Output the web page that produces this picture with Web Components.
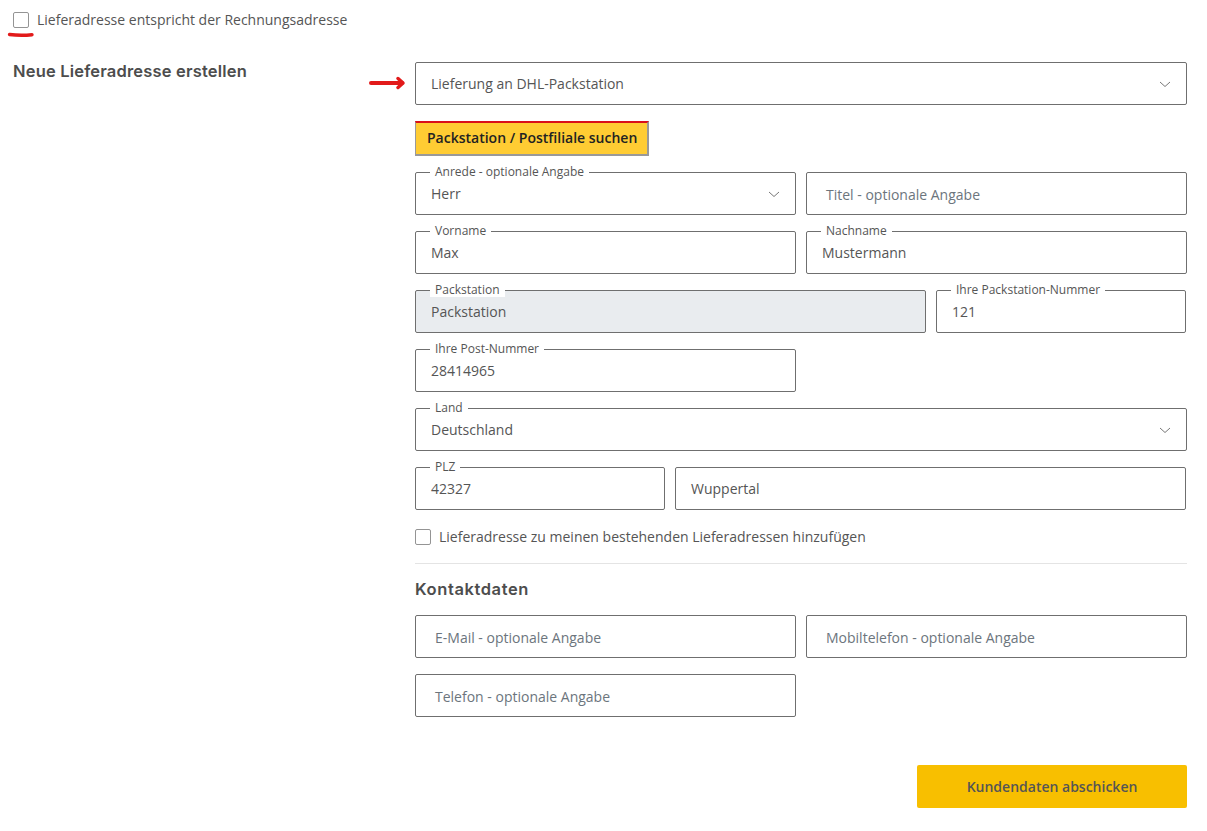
<!DOCTYPE html>
<html lang="de">
<head>
<meta charset="utf-8">
<title>Lieferadresse</title>
<style>
  html, body { margin: 0; background: #fff; }
  body { font-family: "Open Sans", "Liberation Sans", sans-serif; color: #555; }
</style>
</head>
<body>
<address-page>
  <check-row slot="top" inset="13">Lieferadresse entspricht der Rechnungsadresse</check-row>
  <section-title slot="side">Neue Lieferadresse erstellen</section-title>

  <form-field value="Lieferung an DHL-Packstation" select></form-field>
  <yellow-search-button>Packstation / Postfiliale suchen</yellow-search-button>

  <field-row columns="1fr 1fr">
    <form-field label="Anrede - optionale Angabe" value="Herr" select></form-field>
    <form-field placeholder="Titel - optionale Angabe" nudge></form-field>
  </field-row>
  <field-row columns="1fr 1fr">
    <form-field label="Vorname" value="Max"></form-field>
    <form-field label="Nachname" value="Mustermann"></form-field>
  </field-row>
  <field-row columns="511px 250px">
    <form-field label="Packstation" value="Packstation" disabled></form-field>
    <form-field label="Ihre Packstation-Nummer" value="121"></form-field>
  </field-row>
  <field-row columns="1fr 1fr">
    <form-field label="Ihre Post-Nummer" value="28414965"></form-field>
  </field-row>
  <form-field label="Land" value="Deutschland" select></form-field>
  <field-row columns="250px 511px">
    <form-field label="PLZ" value="42327"></form-field>
    <form-field value="Wuppertal"></form-field>
  </field-row>

  <check-row class="save">Lieferadresse zu meinen bestehenden Lieferadressen hinzufügen</check-row>
  <hr-line></hr-line>
  <section-title class="contact">Kontaktdaten</section-title>

  <field-row columns="1fr 1fr">
    <form-field placeholder="E-Mail - optionale Angabe" nudge></form-field>
    <form-field placeholder="Mobiltelefon - optionale Angabe" nudge></form-field>
  </field-row>
  <field-row columns="1fr 1fr">
    <form-field placeholder="Telefon - optionale Angabe" nudge></form-field>
  </field-row>

  <submit-button slot="footer">Kundendaten abschicken</submit-button>
</address-page>

<script>
class AddressPage extends HTMLElement {
  static template = /* html */ `
    <style>
      :host {
        display: block;
        position: relative;
        box-sizing: border-box;
        height: 831px;
        padding: 11px 20px 0 0;
      }
      .columns {
        display: grid;
        grid-template-columns: 415px 772px;
        margin-top: 32px;
      }
      .side { padding: 0 0 0 13px; }
      .main {
        display: flex;
        flex-direction: column;
        gap: 16px;
        padding-top: 1px;
      }
      ::slotted(.save) { margin-top: 2px; }
      ::slotted(hr-line) { margin-top: 1px; }
      ::slotted(.contact) { margin-top: -1px; letter-spacing: 0.6px; }
      .footer {
        display: flex;
        justify-content: flex-end;
        margin-top: 48px;
      }
      /* hand drawn marks on top of the screenshot */
      .mark { position: absolute; }
      .underline { left: 6px; top: 32px; }
      .arrow { left: 368px; top: 75px; }
    </style>
    <slot name="top"></slot>
    <div class="columns">
      <div class="side"><slot name="side"></slot></div>
      <div class="main"><slot></slot></div>
    </div>
    <div class="footer"><slot name="footer"></slot></div>
    <svg class="mark underline" width="29" height="6" viewBox="0 0 29 6">
      <path d="M3.500 2.500C10 3.300 20 3.300 26 2.700" fill="none" stroke="#e21a1a" stroke-width="3.400" stroke-linecap="round"/>
    </svg>
    <svg class="mark arrow" width="38" height="16" viewBox="0 0 38 16">
      <path d="M3 8H34" fill="none" stroke="#e21a1a" stroke-width="4" stroke-linecap="round"/>
      <path d="M30 3.500L35 8L30 12.500" fill="none" stroke="#e21a1a" stroke-width="3.500" stroke-linecap="round" stroke-linejoin="round"/>
    </svg>
  `

  constructor() {
    super()
    this.attachShadow({ mode: "open" }).innerHTML = this.constructor.template
  }
}

class FieldRow extends HTMLElement {
  static template = /* html */ `
    <style>
      :host { display: grid; column-gap: 10px; }
    </style>
    <slot></slot>
  `

  constructor() {
    super()
    this.attachShadow({ mode: "open" }).innerHTML = this.constructor.template
  }

  connectedCallback() {
    this.style.gridTemplateColumns = this.getAttribute("columns")
  }
}

class FormField extends HTMLElement {
  static template = /* html */ `
    <style>
      :host {
        display: block;
        position: relative;
        box-sizing: border-box;
        height: 43px;
        padding: 0 15px;
        border: 1px solid #6f6f6f;
        border-radius: 2px;
        font-size: 14px;
        line-height: 41px;
        color: #555;
        background: #fff;
      }
      :host([disabled]) { background: #e9ecef; }
      :host([nudge]) { padding-left: 19px; color: #6c757d; }
      .value { display: block; white-space: nowrap; }
      :host([nudge]) .value { position: relative; top: 1px; }
      label {
        position: absolute;
        left: 14px;
        top: -8px;
        padding: 0 5px;
        font-size: 12px;
        line-height: 14px;
        background: #fff;
        white-space: nowrap;
      }
      label:empty { display: none; }
      svg { position: absolute; right: 15px; top: 18px; }
      :host(:not([select])) svg { display: none; }
    </style>
    <label></label>
    <span class="value"></span>
    <svg width="12" height="7" viewBox="0 0 12 7">
      <path d="M1 1L6 5.500L11 1" fill="none" stroke="#777" stroke-width="1"/>
    </svg>
  `

  constructor() {
    super()
    this.attachShadow({ mode: "open" }).innerHTML = this.constructor.template
  }

  connectedCallback() {
    const shadow = this.shadowRoot
    shadow.querySelector("label").textContent = this.getAttribute("label") || ""
    shadow.querySelector(".value").textContent =
      this.getAttribute("value") || this.getAttribute("placeholder") || ""
  }
}

class CheckRow extends HTMLElement {
  static template = /* html */ `
    <style>
      :host {
        display: flex;
        align-items: center;
        gap: 8px;
        font-size: 14px;
        line-height: 18px;
        color: #555;
      }
      .box {
        flex: none;
        box-sizing: border-box;
        width: 16px;
        height: 16px;
        border: 1px solid #949494;
        border-radius: 2px;
        background: #fff;
      }
    </style>
    <span class="box"></span>
    <span><slot></slot></span>
  `

  constructor() {
    super()
    this.attachShadow({ mode: "open" }).innerHTML = this.constructor.template
  }

  connectedCallback() {
    const inset = this.getAttribute("inset")
    if (inset) this.style.paddingLeft = `${inset}px`
  }
}

class SectionTitle extends HTMLElement {
  static template = /* html */ `
    <style>
      :host {
        display: block;
        font-family: Inter, "Open Sans", sans-serif;
        font-size: 16.500px;
        font-weight: 600;
        line-height: 20px;
        letter-spacing: 0.18px;
        color: #4d4d4d;
      }
    </style>
    <slot></slot>
  `

  constructor() {
    super()
    this.attachShadow({ mode: "open" }).innerHTML = this.constructor.template
  }
}

class HrLine extends HTMLElement {
  static template = /* html */ `
    <style>
      :host { display: block; height: 1px; background: #e4e4e4; }
    </style>
  `

  constructor() {
    super()
    this.attachShadow({ mode: "open" }).innerHTML = this.constructor.template
  }
}

class YellowSearchButton extends HTMLElement {
  static template = /* html */ `
    <style>
      :host {
        display: block;
        align-self: flex-start;
        box-sizing: border-box;
        height: 35px;
        padding: 0 10px 0 11px;
        border: 2px solid #999;
        border-top-color: #d9101a;
        border-left-width: 1px;
        background: #ffcc33;
        font-size: 14px;
        font-weight: 600;
        line-height: 30px;
        color: #222;
        white-space: nowrap;
      }
    </style>
    <slot></slot>
  `

  constructor() {
    super()
    this.attachShadow({ mode: "open" }).innerHTML = this.constructor.template
  }
}

class SubmitButton extends HTMLElement {
  static template = /* html */ `
    <style>
      :host {
        display: block;
        width: 270px;
        height: 43px;
        border-radius: 2px;
        background: #f8bf00;
        font-size: 14px;
        font-weight: 600;
        line-height: 43px;
        text-align: center;
        color: #555;
      }
    </style>
    <slot></slot>
  `

  constructor() {
    super()
    this.attachShadow({ mode: "open" }).innerHTML = this.constructor.template
  }
}

customElements.define("address-page", AddressPage)
customElements.define("field-row", FieldRow)
customElements.define("form-field", FormField)
customElements.define("check-row", CheckRow)
customElements.define("section-title", SectionTitle)
customElements.define("hr-line", HrLine)
customElements.define("yellow-search-button", YellowSearchButton)
customElements.define("submit-button", SubmitButton)
</script>
</body>
</html>
